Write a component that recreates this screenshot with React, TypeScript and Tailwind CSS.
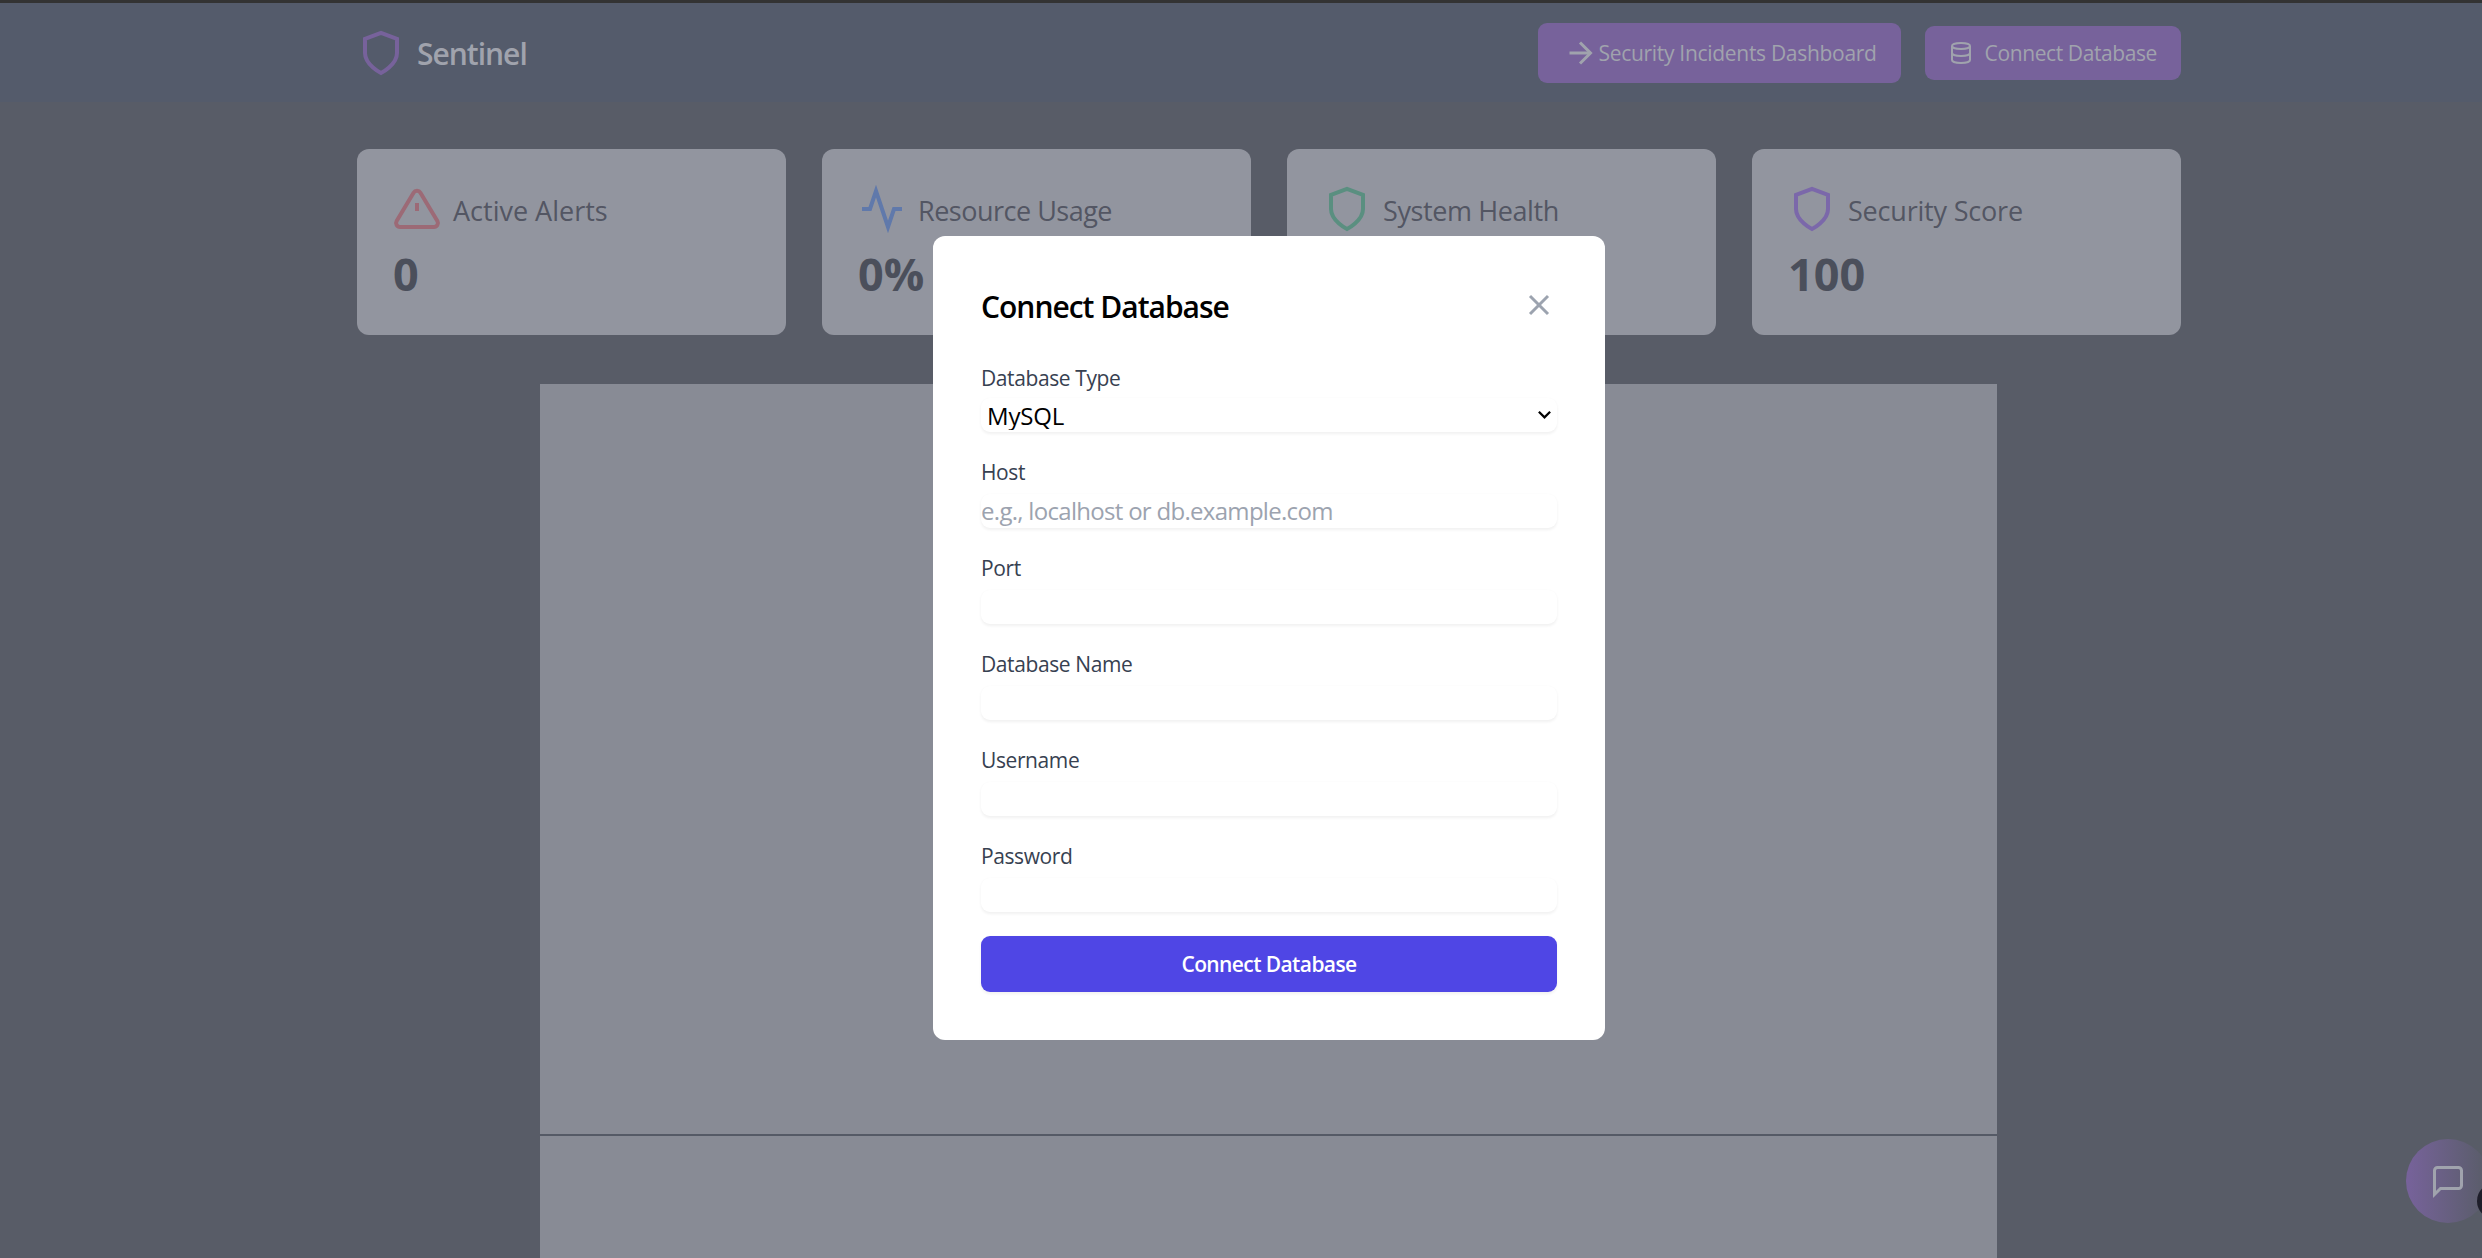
const FONT = "font-['Open_Sans','Noto_Sans',sans-serif]";

function ShieldIcon({ color }: { color: string }) {
  return (
    <svg width="48" height="48" viewBox="0 0 24 24" fill="none" stroke={color} strokeWidth="2" className="shrink-0">
      <path d="M12 22s8-4 8-10V5l-8-3-8 3v7c0 6 8 10 8 10z" />
    </svg>
  );
}

function AlertIcon({ color }: { color: string }) {
  return (
    <svg width="48" height="48" viewBox="0 0 24 24" fill="none" stroke={color} strokeWidth="2" className="shrink-0">
      <path d="M10.29 3.86L1.82 18a2 2 0 0 0 1.71 3h16.94a2 2 0 0 0 1.71-3L13.71 3.86a2 2 0 0 0-3.42 0z" />
      <line x1="12" y1="9" x2="12" y2="13" />
    </svg>
  );
}

function ActivityIcon({ color }: { color: string }) {
  return (
    <svg width="48" height="48" viewBox="0 0 24 24" fill="none" stroke={color} strokeWidth="2" className="shrink-0">
      <polyline points="22 12 18 12 15 21 9 3 6 12 2 12" />
    </svg>
  );
}

function Card({ icon, title, value, track }: { icon: React.ReactNode; title: string; value?: string; track: string }) {
  return (
    <div className="h-[186px] rounded-[12px] bg-[#92959f] px-[36px] pt-[36px]">
      <div className="flex h-[48px] items-center gap-[12px]">
        {icon}
        <span className={`pt-[4px] text-[27px] font-medium leading-[40px] text-[#535663] ${track}`}>{title}</span>
      </div>
      <div className="mt-[14px] text-[45px] font-bold leading-[54px] text-[#4b4f5b]">{value}</div>
    </div>
  );
}

function Field({ label, placeholder }: { label: string; placeholder?: string }) {
  return (
    <div>
      <label className="block text-[21px] font-medium leading-[32px] tracking-[-0.4px] text-[#374151]">{label}</label>
      <input
        placeholder={placeholder}
        className="mt-[6px] block h-[34px] w-full rounded-[9px] bg-white text-[24px] tracking-[-0.7px] text-black shadow-[0_1.5px_3px_rgba(0,0,0,0.06)] outline-none placeholder:text-[#9ca3af]"
      />
    </div>
  );
}

export default function App() {
  return (
    <div className={`relative h-[1258px] w-full overflow-hidden border-t-[3px] border-[#333333] bg-[#585c67] ${FONT}`}>
      <header className="flex h-[99px] items-center justify-between bg-[#545b6b] pl-[357px] pr-[301px]">
        <div className="flex items-center gap-[12px]">
          <ShieldIcon color="#77629b" />
          <span className="pt-[2px] text-[30px] font-semibold leading-[42px] tracking-[-1px] text-[#a0a3ad]">Sentinel</span>
        </div>
        <div className="flex items-center gap-[24px]">
          <button className="flex h-[60px] items-center rounded-[9px] bg-[#77629b] px-[24px] text-[21px] font-medium tracking-[-0.3px] text-[#a0a3ad]">
            <svg width="36" height="36" viewBox="0 0 24 24" fill="none" stroke="currentColor" strokeWidth="2">
              <line x1="5" y1="12" x2="19" y2="12" />
              <polyline points="12 5 19 12 12 19" />
            </svg>
            <span className="pt-[2px]">Security Incidents Dashboard</span>
          </button>
          <button className="flex h-[54px] items-center gap-[12px] rounded-[9px] bg-[#77629b] px-[24px] text-[21px] font-medium tracking-[-0.4px] text-[#a0a3ad]">
            <svg width="24" height="24" viewBox="0 0 24 24" fill="none" stroke="currentColor" strokeWidth="2">
              <ellipse cx="12" cy="5" rx="9" ry="3" />
              <path d="M21 12c0 1.66-4 3-9 3s-9-1.34-9-3" />
              <path d="M3 5v14c0 1.66 4 3 9 3s9-1.34 9-3V5" />
            </svg>
            <span className="pt-[2px]">Connect Database</span>
          </button>
        </div>
      </header>

      <main className="pl-[357px] pr-[301px] pt-[47px]">
        <div className="grid grid-cols-4 gap-[36px]">
          <Card icon={<AlertIcon color="#9c6a76" />} title="Active Alerts" value="0" track="tracking-[0px]" />
          <Card icon={<ActivityIcon color="#6079ab" />} title="Resource Usage" value="0%" track="tracking-[-0.5px]" />
          <Card icon={<ShieldIcon color="#5a8f80" />} title="System Health" track="tracking-[-0.4px]" />
          <Card icon={<ShieldIcon color="#7b68aa" />} title="Security Score" value="100" track="tracking-[-0.2px]" />
        </div>
        <div className="ml-[183px] mt-[49px] h-[900px] w-[1457px] bg-[#888b95]">
          <div className="h-[752px] border-b-[2px] border-[#555a66]" />
        </div>
      </main>

      <div className="absolute left-[2406px] top-[1136px] flex h-[84px] w-[84px] items-center justify-center rounded-full bg-gradient-to-r from-[#77629b] to-[#585c67]">
        <svg width="36" height="36" viewBox="0 0 24 24" fill="none" stroke="#a0a3ad" strokeWidth="2">
          <path d="M21 15a2 2 0 0 1-2 2H7l-4 4V5a2 2 0 0 1 2-2h14a2 2 0 0 1 2 2z" />
        </svg>
      </div>
      <div className="absolute left-[2477px] top-[1180px] h-[36px] w-[36px] rounded-full bg-[#1e1e2a]" />

      <div className="absolute left-[933px] top-[233px] w-[672px] rounded-[12px] bg-white p-[48px]">
        <div className="mb-[36px] flex h-[42px] items-start justify-between">
          <h2 className="pt-[2px] text-[30px] font-semibold leading-[42px] tracking-[-1px] text-black">Connect Database</h2>
          <svg className="mt-[3px]" width="36" height="36" viewBox="0 0 24 24" fill="none" stroke="#9ca3af" strokeWidth="2">
            <line x1="18" y1="6" x2="6" y2="18" />
            <line x1="6" y1="6" x2="18" y2="18" />
          </svg>
        </div>
        <div className="flex flex-col gap-[24px]">
          <div>
            <label className="block pt-[1px] text-[21px] font-medium leading-[31px] tracking-[-0.4px] text-[#374151]">Database Type</label>
            <div className="relative mt-[4px]">
              <select className="block h-[34px] w-full appearance-none rounded-[9px] bg-white pb-[2px] pl-[6px] text-[24px] tracking-[-0.2px] text-black shadow-[0_1.5px_3px_rgba(0,0,0,0.06)] outline-none">
                <option>MySQL</option>
              </select>
              <svg className="absolute right-[5px] top-[9px]" width="15" height="15" viewBox="0 0 16 16" fill="none" stroke="#000000" strokeWidth="2.4">
                <polyline points="2 5 8 11 14 5" />
              </svg>
            </div>
          </div>
          <Field label="Host" placeholder="e.g., localhost or db.example.com" />
          <Field label="Port" />
          <Field label="Database Name" />
          <Field label="Username" />
          <Field label="Password" />
          <button className="h-[56px] w-full rounded-[9px] bg-[#4f46e5] pt-[2px] text-[21px] font-semibold tracking-[-0.6px] text-white shadow-[0_1.5px_3px_rgba(0,0,0,0.06)]">
            Connect Database
          </button>
        </div>
      </div>
    </div>
  );
}
